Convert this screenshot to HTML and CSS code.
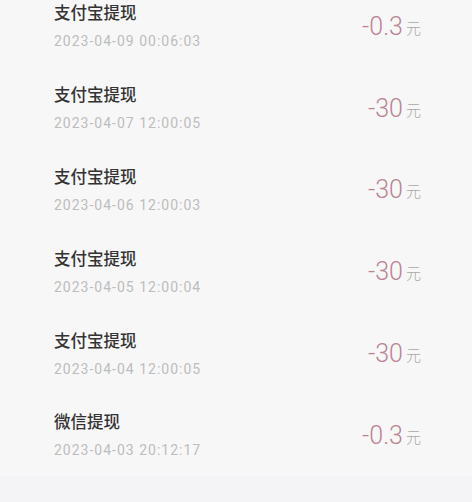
FILE: index.html
```html
<!DOCTYPE html>
<html lang="zh-CN">
<head>
  <meta charset="UTF-8" />
  <meta name="viewport" content="width=device-width, initial-scale=1.0"/>
  <title>提现记录</title>
  <link rel="stylesheet" href="styles.css">
</head>
<body>

  <!-- 提现记录 -->
  <div class="record-list">
    <div class="record">
      <div class="info">
        <div class="title">支付宝提现</div>
        <div class="date">2023-04-09 00:06:03</div>
      </div>
      <div class="amount">-0.3<span class="unit">元</span></div>
    </div>
    <div class="record">
      <div class="info">
        <div class="title">支付宝提现</div>
        <div class="date">2023-04-07 12:00:05</div>
      </div>
      <div class="amount">-30<span class="unit">元</span></div>
    </div>
    <div class="record">
      <div class="info">
        <div class="title">支付宝提现</div>
        <div class="date">2023-04-06 12:00:03</div>
      </div>
      <div class="amount">-30<span class="unit">元</span></div>
    </div>
    <div class="record">
      <div class="info">
        <div class="title">支付宝提现</div>
        <div class="date">2023-04-05 12:00:04</div>
      </div>
      <div class="amount">-30<span class="unit">元</span></div>
    </div>
    <div class="record">
      <div class="info">
        <div class="title">支付宝提现</div>
        <div class="date">2023-04-04 12:00:05</div>
      </div>
      <div class="amount">-30<span class="unit">元</span></div>
    </div>
    <div class="record">
      <div class="info">
        <div class="title">微信提现</div>
        <div class="date">2023-04-03 20:12:17</div>
      </div>
      <div class="amount">-0.3<span class="unit">元</span></div>
    </div>
  </div>

</body>
</html>
```

FILE: styles.css
```css
body {
  background-color: #f4f4f6;
  margin: 0;
  padding: 0;
  font-family: Roboto, "Noto Sans CJK SC", sans-serif;
}

.record-list {
  margin-top: -15px;
  background: #f7f7f7;
}

.record {
  height: 81.8px;
  display: flex;
  align-items: center;
  justify-content: space-between;
  padding: 0 51px 0 54px;
}

.title {
  font-family: "Noto Sans CJK SC", sans-serif;
  font-size: 16.5px;
  font-weight: 500;
  line-height: 22px;
  color: #333;
}

.date {
  margin-top: 9px;
  font-size: 14px;
  line-height: 18px;
  letter-spacing: 1px;
  color: #bdbdbd;
}

.amount {
  font-size: 25px;
  font-weight: 300;
  color: #bb8493;
  padding-top: 1px;
}

.unit {
  font-family: "Noto Sans CJK SC", sans-serif;
  font-size: 15px;
  color: #a8a8a8;
  margin-left: 3px;
  vertical-align: 1px;
}
```
